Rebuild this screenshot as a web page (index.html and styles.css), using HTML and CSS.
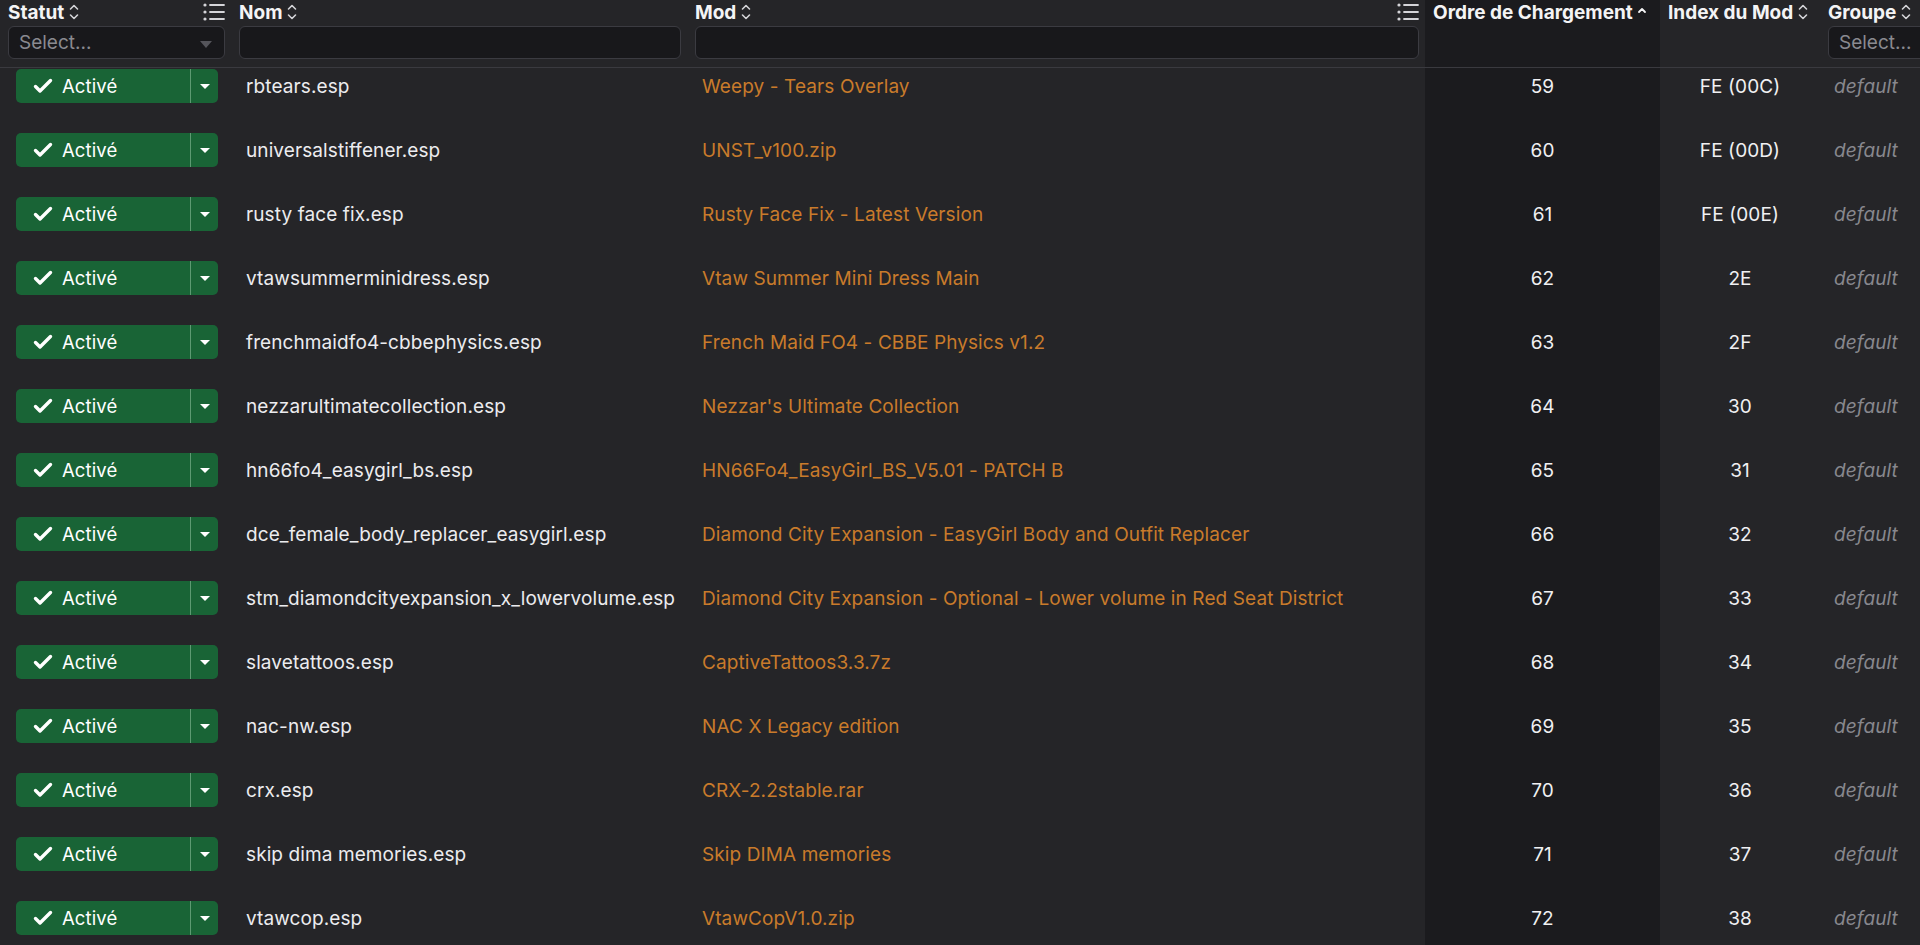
FILE: index.html
```html
<!DOCTYPE html>
<html lang="fr">
<head>
    <meta charset="UTF-8">
    <meta name="viewport" content="width=device-width, initial-scale=1.0">
    <title>Ordre de chargement</title>
    <link rel="stylesheet" href="styles.css">
</head>
<body>
    <svg class="defs" width="0" height="0">
        <symbol id="sort" viewBox="0 0 12 20">
            <path d="M2.5 7 L6 3.5 L9.5 7 M2.5 13 L6 16.5 L9.5 13" fill="none" stroke="currentColor" stroke-width="1.6" stroke-linecap="round" stroke-linejoin="round"/>
        </symbol>
        <symbol id="list" viewBox="0 0 22 20">
            <circle cx="2" cy="3" r="1.6"/>
            <circle cx="2" cy="10" r="1.6"/>
            <circle cx="2" cy="17" r="1.6"/>
            <path d="M7 3 H21 M7 10 H21 M7 17 H21" stroke="currentColor" stroke-width="1.8" stroke-linecap="round"/>
        </symbol>
        <symbol id="check" viewBox="0 0 20 16">
            <path d="M2.5 8.5 L7 13 L17.5 2.5" fill="none" stroke="currentColor" stroke-width="3.4" stroke-linecap="round" stroke-linejoin="round"/>
        </symbol>
    </svg>

    <div class="grid">
        <div class="head">
            <div class="hcell">
                <div class="title">Statut <svg class="sort"><use href="#sort"/></svg><svg class="list"><use href="#list"/></svg></div>
                <div class="filter select"><span>Select...</span><span class="tri"></span></div>
            </div>
            <div class="hcell">
                <div class="title">Nom <svg class="sort"><use href="#sort"/></svg></div>
                <div class="filter"></div>
            </div>
            <div class="hcell">
                <div class="title">Mod <svg class="sort"><use href="#sort"/></svg><svg class="list"><use href="#list"/></svg></div>
                <div class="filter"></div>
            </div>
            <div class="hcell dark">
                <div class="title">Ordre de Chargement <svg class="asc" viewBox="0 0 10 8"><path d="M2 6 L5 3 L8 6" fill="none" stroke="currentColor" stroke-width="1.8" stroke-linecap="round" stroke-linejoin="round"/></svg></div>
            </div>
            <div class="hcell">
                <div class="title">Index du Mod <svg class="sort"><use href="#sort"/></svg></div>
            </div>
            <div class="hcell">
                <div class="title">Groupe <svg class="sort"><use href="#sort"/></svg></div>
                <div class="filter select"><span>Select...</span></div>
            </div>
        </div>

        <div class="rows" id="rows"></div>
    </div>

    <script>
        const plugins = [
            ['rbtears.esp', 'Weepy - Tears Overlay', 59, 'FE (00C)'],
            ['universalstiffener.esp', 'UNST_v100.zip', 60, 'FE (00D)'],
            ['rusty face fix.esp', 'Rusty Face Fix - Latest Version', 61, 'FE (00E)'],
            ['vtawsummerminidress.esp', 'Vtaw Summer Mini Dress Main', 62, '2E'],
            ['frenchmaidfo4-cbbephysics.esp', 'French Maid FO4 - CBBE Physics v1.2', 63, '2F'],
            ['nezzarultimatecollection.esp', "Nezzar's Ultimate Collection", 64, '30'],
            ['hn66fo4_easygirl_bs.esp', 'HN66Fo4_EasyGirl_BS_V5.01 - PATCH B', 65, '31'],
            ['dce_female_body_replacer_easygirl.esp', 'Diamond City Expansion - EasyGirl Body and Outfit Replacer', 66, '32'],
            ['stm_diamondcityexpansion_x_lowervolume.esp', 'Diamond City Expansion - Optional - Lower volume in Red Seat District', 67, '33'],
            ['slavetattoos.esp', 'CaptiveTattoos3.3.7z', 68, '34'],
            ['nac-nw.esp', 'NAC X Legacy edition', 69, '35'],
            ['crx.esp', 'CRX-2.2stable.rar', 70, '36'],
            ['skip dima memories.esp', 'Skip DIMA memories', 71, '37'],
            ['vtawcop.esp', 'VtawCopV1.0.zip', 72, '38']
        ];

        const rows = document.getElementById('rows');
        plugins.forEach(([name, mod, order, index]) => {
            const row = document.createElement('div');
            row.className = 'row';
            row.innerHTML = `
                <div class="cell">
                    <div class="status">
                        <span class="status-main"><svg class="check"><use href="#check"/></svg>Activé</span>
                        <span class="status-caret"></span>
                    </div>
                </div>
                <div class="cell name">${name}</div>
                <div class="cell mod">${mod}</div>
                <div class="cell dark num">${order}</div>
                <div class="cell num">${index}</div>
                <div class="cell group">default</div>`;
            rows.appendChild(row);
        });
    </script>
</body>
</html>
```

FILE: styles.css
```css
body {
    margin: 0;
    background-color: #252528;
    color: #e4e4e7;
    font-family: Inter, "Noto Sans", sans-serif;
    overflow: hidden;
}

.defs {
    position: absolute;
}

.grid {
    width: 1920px;
    height: 945px;
    overflow: hidden;
}

.head,
.row {
    display: grid;
    grid-template-columns: 231px 456px 738px 235px 160px 160px;
}

.head {
    position: relative;
    z-index: 1;
    height: 67px;
    background-color: #252528;
    border-bottom: 1px solid #3a3a3f;
}

.hcell {
    display: flex;
    flex-direction: column;
    padding: 2px 6px 0 8px;
    min-width: 0;
}

.dark {
    background-color: #1b1b1e;
}

.title {
    display: flex;
    align-items: center;
    gap: 4px;
    height: 20px;
    font-size: 19px;
    font-weight: 700;
    color: #f4f4f5;
    white-space: nowrap;
}

.sort {
    width: 12px;
    height: 20px;
    color: #d4d4d8;
}

.asc {
    width: 10px;
    height: 8px;
    margin-top: -4px;
    color: #f4f4f5;
}

.list {
    width: 22px;
    height: 20px;
    margin-left: auto;
    fill: #d4d4d8;
    color: #d4d4d8;
}

.filter {
    display: flex;
    align-items: center;
    justify-content: space-between;
    margin-top: 4px;
    height: 33px;
    padding: 0 12px 0 10px;
    box-sizing: border-box;
    background-color: #18181b;
    border: 1px solid #3b3b41;
    border-radius: 6px;
    font-size: 19px;
    color: #8a8a90;
    white-space: nowrap;
}

.tri {
    width: 0;
    height: 0;
    margin-top: 4px;
    border-left: 6px solid transparent;
    border-right: 6px solid transparent;
    border-top: 7px solid #55555b;
}

.rows {
    margin-top: -14px;
}

.row {
    height: 64px;
}

.cell {
    display: flex;
    align-items: center;
    min-width: 0;
    font-size: 19px;
    letter-spacing: 0.1px;
    white-space: nowrap;
}

.cell:first-child {
    padding-left: 16px;
}

.status {
    display: flex;
    width: 202px;
    height: 34px;
    border-radius: 5px;
    background-color: #196436;
    color: #ffffff;
    font-size: 18.5px;
    overflow: hidden;
}

.status-main {
    display: flex;
    align-items: center;
    gap: 9px;
    width: 175px;
    padding-left: 17px;
    box-sizing: border-box;
    border-right: 1px solid #5d9a72;
}

.check {
    width: 20px;
    height: 16px;
    color: #ffffff;
}

.status-caret {
    flex: 1;
    display: flex;
    align-items: center;
    justify-content: center;
}

.status-caret::before {
    content: "";
    border-left: 5px solid transparent;
    border-right: 5px solid transparent;
    border-top: 5px solid #ffffff;
}

.name {
    padding-left: 15px;
    color: #ececef;
}

.mod {
    padding-left: 15px;
    color: #c97b2b;
}

.num {
    justify-content: center;
    color: #f0f0f2;
}

.group {
    padding-left: 14px;
    font-style: italic;
    color: #88888e;
}
```
